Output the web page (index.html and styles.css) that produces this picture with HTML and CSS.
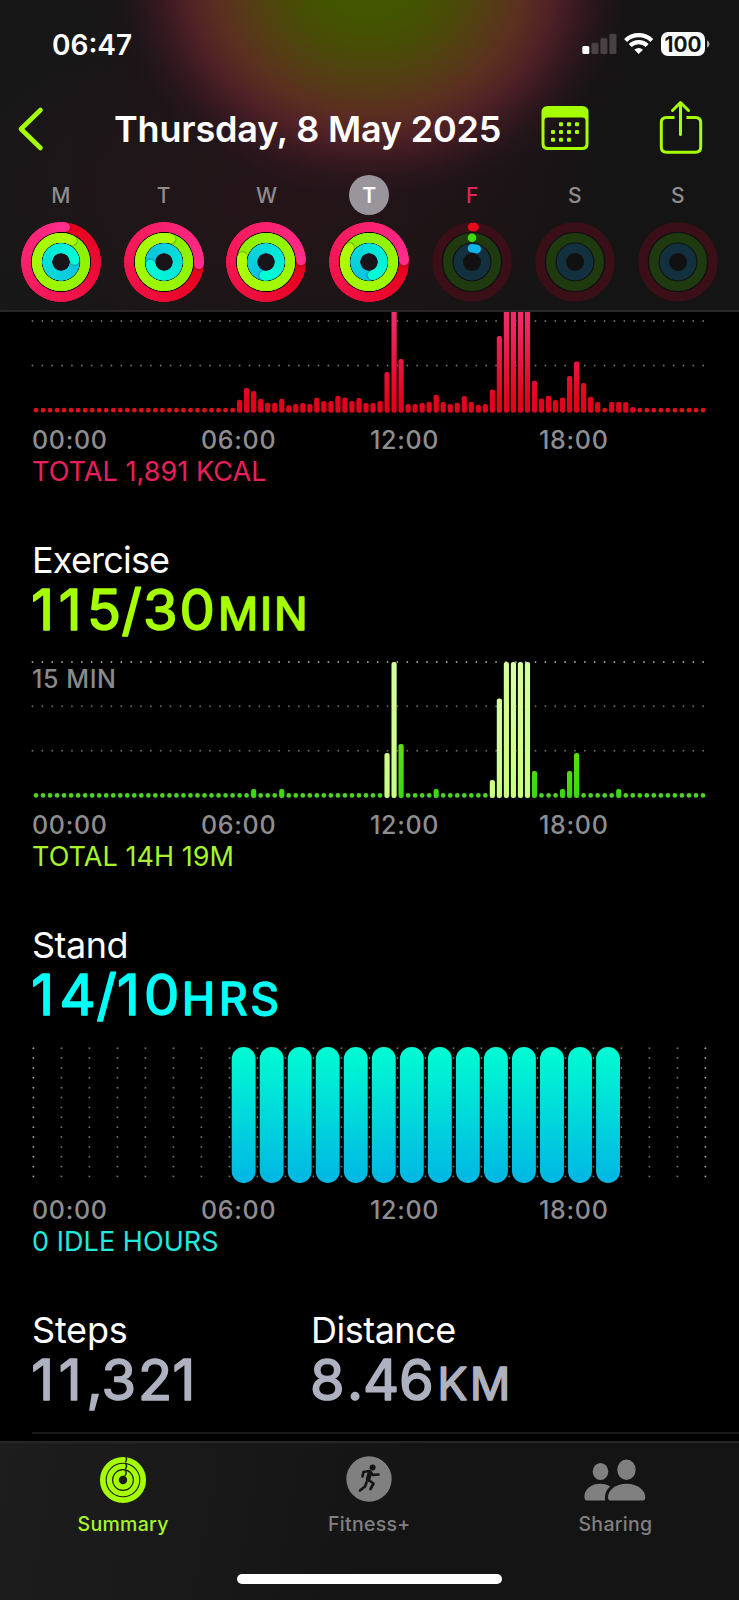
FILE: index.html
```html
<!DOCTYPE html>
<html lang="en">
<head>
<meta charset="utf-8">
<title>Summary</title>
<link rel="stylesheet" href="styles.css">
</head>
<body>
<div class="phone">
  <header class="header">
    <div class="status">
      <span class="clock">06:47</span>
      <svg class="status-icons" width="130" height="26" viewBox="0 0 130 26">
        <rect x="0.3" y="15" width="7" height="8" rx="1.5" fill="#fff"/>
        <rect x="9.4" y="11.7" width="7" height="11.3" rx="1.5" fill="#4a4145"/>
        <rect x="18.4" y="7.3" width="7" height="15.7" rx="1.5" fill="#4a4145"/>
        <rect x="27.4" y="2.7" width="7" height="20.3" rx="1.5" fill="#4a4145"/>
        <g fill="none" stroke="#fff" stroke-width="4.2">
          <path d="M43.6 9.4A19 19 0 0 1 69.8 9.4"/>
          <path d="M48.2 14.6A12.2 12.2 0 0 1 65.2 14.6"/>
        </g>
        <path d="M56.7 23l-4.3-4.3a6.2 6.2 0 0 1 8.6 0z" fill="#fff"/>
        <rect x="79" y="1" width="44" height="24" rx="7" fill="#fff"/>
        <path d="M125 9.5c3.4 1.2 3.4 5.800 0 7z" fill="#a8a8a8"/>
        <text class="battery" x="101" y="20.600" text-anchor="middle" textLength="37" lengthAdjust="spacingAndGlyphs">100</text>
      </svg>
    </div>
    <div class="nav">
      <svg class="back" width="28" height="46" viewBox="0 0 28 46"><path d="M23.500 4L4 23l19.500 19" fill="none" stroke="#a6ff00" stroke-width="4.600" stroke-linecap="round" stroke-linejoin="round"/></svg>
      <h1 class="date">Thursday, 8 May 2025</h1>
      <svg class="calendar" width="48" height="45" viewBox="0 0 48 45">
        <path fill-rule="evenodd" fill="#a6ff00" d="M7 0H41Q47.500 0 47.500 6.500V38Q47.500 44 41 44H7Q.5 44 .5 38V6.500Q.5 0 7 0ZM6.500 11.500Q3.500 11.500 3.500 14.500V37.500Q3.500 41 7 41H41Q44.500 41 44.500 37.500V14.500Q44.500 11.500 41.500 11.500Z"/>
        <g fill="#a6ff00">
          <rect x="18" y="16.300" width="4" height="4" rx="1"/><rect x="26" y="16.300" width="4" height="4" rx="1"/><rect x="34" y="16.300" width="4" height="4" rx="1"/>
          <rect x="10" y="24" width="4" height="4" rx="1"/><rect x="18" y="24" width="4" height="4" rx="1"/><rect x="26" y="24" width="4" height="4" rx="1"/><rect x="34" y="24" width="4" height="4" rx="1"/>
          <rect x="10" y="31.700" width="4" height="4" rx="1"/><rect x="18" y="31.700" width="4" height="4" rx="1"/><rect x="26" y="31.700" width="4" height="4" rx="1"/>
        </g>
      </svg>
      <svg class="share" width="44" height="56" viewBox="0 0 44 56">
        <g fill="none" stroke="#a6ff00" stroke-width="3" stroke-linecap="round" stroke-linejoin="round">
          <path stroke-linecap="butt" d="M15.500 17.500H7.500Q2.300 17.500 2.300 22.700V47Q2.300 52.300 7.500 52.300H36.500Q41.700 52.300 41.700 47V22.700Q41.700 17.500 36.500 17.500H27.500"/>
          <path d="M21.500 34.500V3M13.500 10.500L21.500 2.500L29.500 10.500"/>
        </g>
      </svg>
    </div>
    <div class="week" id="week"></div>
  </header>

  <main class="content">
    <section class="metric move">
      <svg class="chart" id="move-chart" width="739" height="106" viewBox="0 312 739 106"></svg>
      <div class="hours"><span>00:00</span><span>06:00</span><span>12:00</span><span>18:00</span></div>
      <p class="total">TOTAL 1,891 KCAL</p>
    </section>
    <section class="metric exercise">
      <h2 class="name w-exercise">Exercise</h2>
      <svg class="value" width="739" height="75" viewBox="0 0 739 75"><text class="num" x="31.300 58.800 87 121.500 143 179.500" y="50.300">115/30</text><text class="unit" x="218 260 274" y="50.300">MIN</text></svg>
      <svg class="chart" id="exercise-chart" width="739" height="148" viewBox="0 655 739 148"><text class="scale" x="32" y="688" textLength="84">15 MIN</text></svg>
      <div class="hours"><span>00:00</span><span>06:00</span><span>12:00</span><span>18:00</span></div>
      <p class="total">TOTAL 14H 19M</p>
    </section>
    <section class="metric stand">
      <h2 class="name w-stand">Stand</h2>
      <svg class="value" width="739" height="75" viewBox="0 0 739 75"><text class="num" x="31.300 59.500 96.500 117 144" y="50.300">14/10</text><text class="unit" x="182 219 250.500" y="50.300">HRS</text></svg>
      <svg class="chart" id="stand-chart" width="739" height="148" viewBox="0 1040 739 148"></svg>
      <div class="hours"><span>00:00</span><span>06:00</span><span>12:00</span><span>18:00</span></div>
      <p class="total">0 IDLE HOURS</p>
    </section>
    <section class="pair">
      <div class="cell">
        <h2 class="name w-steps">Steps</h2>
        <svg class="value" width="278" height="75" viewBox="0 0 278 75"><text class="num" x="31.300 58.800 86.500 101.500 138 172.500" y="50.300">11,321</text></svg>
      </div>
      <div class="cell">
        <h2 class="name w-distance">Distance</h2>
        <svg class="value" width="300" height="75" viewBox="279 0 300 75"><text class="num" x="310 347 363 399" y="50.300">8.46</text><text class="unit" x="437.500 470" y="50.300">KM</text></svg>
      </div>
    </section>
    <div class="divider"></div>
  </main>

  <footer class="tabbar">
    <nav class="tabs">
      <a class="tab active">
        <svg width="64" height="50" viewBox="0 0 64 50">
          <g fill="none" stroke="#a6ff00">
            <circle cx="32" cy="25" r="20.200" stroke-width="5.700"/>
            <circle cx="32" cy="25" r="13.600" stroke-width="5.300"/>
            <circle cx="32" cy="25" r="7" stroke-width="5.600"/>
          </g>
          <path d="M34.300 1q2.500 3 0 6.300M34.300 8q2.500 3 0 6M34 15q2.500 3-.3 6" fill="none" stroke="#1a2408" stroke-width="1.500"/>
        </svg>
        <span>Summary</span>
      </a>
      <a class="tab">
        <svg width="64" height="50" viewBox="0 0 64 50">
          <circle cx="32" cy="24" r="22.700" fill="#808080"/>
          <g fill="none" stroke="#141414" stroke-width="2.700" stroke-linecap="round" stroke-linejoin="round">
            <path d="M25.500 21.500L26.500 17L32 16L36 20L41.500 19.500"/>
            <path stroke-width="4.600" d="M33 17.500L31 24.500"/>
            <path d="M31.500 25L36.500 28.500L33.500 34M29.500 27.500L28 31.500L23 35.500"/>
          </g>
          <circle cx="35.600" cy="12.500" r="3" fill="#141414"/>
        </svg>
        <span>Fitness+</span>
      </a>
      <a class="tab">
        <svg width="64" height="50" viewBox="0 0 64 50">
          <g fill="#808080">
            <ellipse cx="17.500" cy="16.500" rx="7.800" ry="8.600"/>
            <path d="M1.500 43C.5 35 8 28.800 17 28.800C21 28.800 24.500 29.800 27.200 31.500C23.500 34.500 21.600 38.500 22 45.500H3.500Q1.700 45.500 1.500 43Z"/>
            <ellipse cx="43.500" cy="14.800" rx="9.200" ry="10.200"/>
            <path d="M25 43C24.500 35.500 32.500 28.800 43.500 28.800S62.800 35.500 62.300 43Q62 45.500 60 45.500H27.300Q25.300 45.500 25 43Z"/>
          </g>
        </svg>
        <span>Sharing</span>
      </a>
    </nav>
    <div class="home"></div>
  </footer>
</div>
<script src="app.js"></script>
</body>
</html>
```

FILE: styles.css
```css
* { box-sizing: border-box; margin: 0; padding: 0; }
body { background: #000; font-family: Inter, "Liberation Sans", sans-serif; color: #fff; }
svg { display: block; flex: none; }
.phone { width: 739px; height: 1600px; display: flex; flex-direction: column; overflow: hidden; background: #000; }

.header {
  flex: none; height: 312px; border-bottom: 2px solid #272526;
  background:
    radial-gradient(ellipse 262px 228px at 370px -22px, #425600 0, #425500 18%, #484c06 32%, #543e14 46%, #5b2f20 59%, #502226 70%, rgba(62,26,34,.92) 79%, rgba(44,22,29,.7) 88%, rgba(32,20,25,.35) 97%, rgba(20,20,20,0) 112%),
    radial-gradient(ellipse 330px 190px at 300px 190px, rgba(52,20,28,.55), rgba(30,20,22,0)),
    linear-gradient(90deg, rgba(34,31,33,.3), rgba(20,20,20,0) 60%),
    #141414;
}
.status { height: 88px; padding: 31px 27px 0 52px; display: flex; justify-content: space-between; }
.clock { font-size: 28px; font-weight: 600; line-height: 28px; letter-spacing: 0; }
.battery { font-size: 21px; font-weight: 700; fill: #141414; }
.nav { height: 82px; display: flex; align-items: flex-start; padding: 0 36px 0 17px; }
.back { margin-top: 18px; }
.date { margin: 16px 0 0 69px; width: 388px; font-size: 36px; line-height: 50px; font-weight: 600; letter-spacing: -0.180px; white-space: nowrap; }
.calendar { margin: 18px 0 0 39px; }
.share { margin: 12px 0 0 70px; }
.week { display: grid; grid-template-columns: repeat(7, 102.800px); padding-left: 9.500px; }
.day { display: flex; flex-direction: column; align-items: center; padding-top: 5px; }
.letter { width: 40px; height: 40px; line-height: 41px; border-radius: 50%; text-align: center; font-size: 21px; font-weight: 500; color: #8f8b8e; }
.letter.selected { background: #99959a; color: #fff; font-weight: 600; }
.letter.today { color: #e0265f; }
.rings { margin-top: 6px; }

.content { flex: none; height: 1129px; overflow: hidden; }
.metric { height: 385px; }
.metric.move { height: 228px; }
.name { height: 40px; line-height: 41px; padding-left: 32px; font-size: 36px; font-weight: 400; white-space: nowrap; }
.w-exercise { letter-spacing: -0.800px; }
.w-stand { letter-spacing: -0.500px; }
.w-steps { letter-spacing: -0.200px; }
.w-distance { letter-spacing: -0.500px; }
.value { overflow: visible; }
.num { font-size: 56px; stroke-width: 1.600; }
.unit { font-size: 44.500px; stroke-width: 1.600; }
.value text { stroke-linejoin: round; font-weight: 400; }
.exercise .value { fill: #a6ff00; stroke: #a6ff00; }
.stand .value { fill: #00fff6; stroke: #00fff6; }
.pair .value { fill: #aeb2c0; stroke: #aeb2c0; }
.scale { font-size: 25px; font-weight: 500; fill: #8a8a8c; }
.hours { display: grid; grid-template-columns: repeat(4, 169px); margin-top: 7px; padding-left: 32px; font-size: 25px; line-height: 30px; font-weight: 500; color: #8e8e90; letter-spacing: 0.700px; }
.total { padding-left: 32px; font-size: 27px; line-height: 34px; font-weight: 400; white-space: nowrap; letter-spacing: 0.060px; }
.move .total { color: #ec1f5c; }
.exercise .total { color: #a6f52a; }
.stand .total { color: #22eadf; }
.pair { display: flex; height: 121px; }
.cell { width: 279px; flex: none; }
.divider { height: 2px; margin-left: 32px; margin-top: 1px; background: #1b1b1c; }

.tabbar { flex: none; height: 159px; border-top: 2px solid #272727; background: linear-gradient(100deg, #1d1d1d, #141414 55%); }
.tabs { display: grid; grid-template-columns: repeat(3, 246.200px); padding-top: 12px; }
.tab { display: flex; flex-direction: column; align-items: center; gap: 7px; font-size: 19.500px; line-height: 24px; font-weight: 500; color: #808080; letter-spacing: 0.300px; }
.tab.active { color: #a6f52a; }
.home { width: 265px; height: 10px; margin: 38px auto 0; border-radius: 5px; background: #fff; }
```

FILE: app.js
```js
const NS = 'http://www.w3.org/2000/svg';
function add(parent, tag, attrs) {
  const el = document.createElementNS(NS, tag);
  for (const k in attrs) el.setAttribute(k, attrs[k]);
  parent.appendChild(el);
  return el;
}

/* Activity rings */
const RINGS = [
  { r: 35, from: [230, 0, 26], to: [255, 45, 140], track: '#3a0f17' },
  { r: 24.200, from: [138, 240, 0], to: [174, 255, 0], track: '#203a10' },
  { r: 13.700, from: [12, 192, 224], to: [0, 255, 212], track: '#12303e' }
];
const DAYS = [
  ['M', [7, 27, 82]],
  ['T', [94, 16, 260]],
  ['W', [88, 282, 188]],
  ['T', [88, 306, 165], 'selected'],
  ['F', [4, 0, 20], 'today'],
  ['S', null],
  ['S', null]
];
const SMALL = ['#e60a1c', '#3fdb10', '#10b4e8'];
const point = (r, deg) => {
  const a = (deg - 90) * Math.PI / 180;
  return [41 + r * Math.cos(a), 41 + r * Math.sin(a)];
};
const mix = (a, b, t) => 'rgb(' + a.map((v, i) => Math.round(v + (b[i] - v) * t)).join(',') + ')';

DAYS.forEach(([letter, ends, state]) => {
  const day = document.createElement('div');
  day.className = 'day';
  const label = document.createElement('span');
  label.className = 'letter' + (state ? ' ' + state : '');
  label.textContent = letter;
  day.appendChild(label);
  const svg = add(day, 'svg', { class: 'rings', width: 82, height: 82, viewBox: '0 0 82 82' });
  const filled = ends && state !== 'today';
  add(svg, 'circle', { cx: 41, cy: 41, r: filled ? 37 : 39, fill: filled ? '#0c0508' : '#111112' });
  if (filled) add(svg, 'circle', { cx: 41, cy: 41, r: 9.500, fill: '#19141a' });
  RINGS.forEach((ring, k) => {
    const width = 9.400;
    if (!filled) {
      add(svg, 'circle', { cx: 41, cy: 41, r: ring.r, fill: 'none', stroke: ring.track, 'stroke-width': width });
      if (ends) {
        const [x1, y1] = point(ring.r, 0), [x2, y2] = point(ring.r, ends[k] + 0.100);
        add(svg, 'path', { d: `M${x1} ${y1}A${ring.r} ${ring.r} 0 0 1 ${x2} ${y2}`, fill: 'none', stroke: SMALL[k], 'stroke-width': 8.600, 'stroke-linecap': 'round' });
      }
      return;
    }
    /* Overlapping steps round the lap, so no seams show */
    const end = ends[k], steps = 60;
    add(svg, 'circle', { cx: 41, cy: 41, r: ring.r, fill: 'none', stroke: mix(ring.from, ring.to, 0), 'stroke-width': width });
    for (let i = 1; i < steps; i++) {
      const [x1, y1] = point(ring.r, end + i * 6), [x2, y2] = point(ring.r, end + Math.min(i * 6 + 16, 360));
      add(svg, 'path', { d: `M${x1} ${y1}A${ring.r} ${ring.r} 0 0 1 ${x2} ${y2}`, fill: 'none', stroke: mix(ring.from, ring.to, i / steps), 'stroke-width': width });
    }
    const gap = 75 / ring.r;
    const [sx, sy] = point(ring.r, end + gap);
    add(svg, 'circle', { cx: sx, cy: sy, r: width / 2, fill: '#000', opacity: 0.200 });
    const [cx, cy] = point(ring.r, end);
    add(svg, 'circle', { cx, cy, r: width / 2, fill: mix(ring.from, ring.to, 1) });
  });
  document.getElementById('week').appendChild(day);
});

/* Dotted guides */
function guide(svg, y, color) {
  for (let i = 0; i <= 68; i++) add(svg, 'circle', { cx: 32.500 + i * 9.863, cy: y, r: 0.950, fill: color });
}
function gradient(svg, id, y1, y2, top, bottom) {
  const g = add(svg, 'linearGradient', { id, gradientUnits: 'userSpaceOnUse', x1: 0, x2: 0, y1, y2 });
  add(g, 'stop', { offset: 0, 'stop-color': top });
  add(g, 'stop', { offset: 1, 'stop-color': bottom });
}
function bars(svg, base, heights, fill, dot) {
  for (let i = 0; i < 96; i++) {
    const x = 36 + i * 7.021, h = heights[i] || 0;
    if (h < 5.500) add(svg, 'circle', { cx: x, cy: base - 2.500, r: 2.350, fill: dot });
    else add(svg, 'rect', { x: x - 2.600, y: base - h, width: 5.200, height: h, rx: 2.200, fill: fill(i) });
  }
}

/* Move, quarter-hour buckets starting at 07:15 */
const move = document.getElementById('move-chart');
gradient(move, 'g-move', 305, 400, '#f92d74', '#e2041c');
guide(move, 321, '#6c6c6c');
guide(move, 365.500, '#6c6c6c');
const moveHeights = {};
[13, 24.700, 21.700, 14, 10, 10, 14, 7.500, 8.700, 9.700, 8.700, 15, 11.700, 11.700, 17, 15.300, 11.700, 14.700, 9.700,
 9.700, 11.700, 40.700, 130, 53.700, 8.700, 8.700, 9.700, 11, 18, 10.700, 8.700, 10, 16.700, 11, 8, 8.700, 23.300, 76.700,
 130, 130, 130, 130, 32, 14.300, 17, 12.700, 15.300, 36.700, 51.300, 29.700, 16, 10.700, 5, 11, 11, 10.700, 5.600]
  .forEach((h, i) => { moveHeights[29 + i] = h; });
bars(move, 412.700, moveHeights, () => 'url(#g-move)', '#e0101f');

/* Exercise */
const exercise = document.getElementById('exercise-chart');
gradient(exercise, 'g-light', 662, 797, '#d6ffa0', '#caff80');
gradient(exercise, 'g-green', 740, 797, '#62e010', '#3ad810');
guide(exercise, 662, '#a0a0a0');
guide(exercise, 706.300, '#666');
guide(exercise, 750.700, '#666');
const light = [50, 51, 65, 66, 67, 68, 69, 70];
const exerciseHeights = { 31: 9, 35: 9, 50: 45, 51: 136, 52: 54, 57: 9, 65: 18, 66: 99.500, 67: 136, 68: 136, 69: 136, 70: 136, 71: 27, 75: 9, 76: 27, 77: 45, 83: 9 };
bars(exercise, 797.900, exerciseHeights, i => light.includes(i) ? 'url(#g-light)' : 'url(#g-green)', '#4bd422');

/* Stand */
const stand = document.getElementById('stand-chart');
gradient(stand, 'g-stand', 1047, 1183, '#00fcd2', '#00b6e4');
for (let k = 0; k <= 24; k++)
  for (let j = 0; j < 14; j++)
    add(stand, 'circle', { cx: 33.400 + k * 28, cy: 1048.200 + j * 9.870, r: 0.950, fill: k === 0 || k === 24 ? '#a0a0a0' : '#6c6c6c' });
for (let k = 0; k < 14; k++)
  add(stand, 'rect', { x: 231.700 + k * 28.030, y: 1047, width: 23.900, height: 136, rx: 11.900, fill: 'url(#g-stand)' });
```
